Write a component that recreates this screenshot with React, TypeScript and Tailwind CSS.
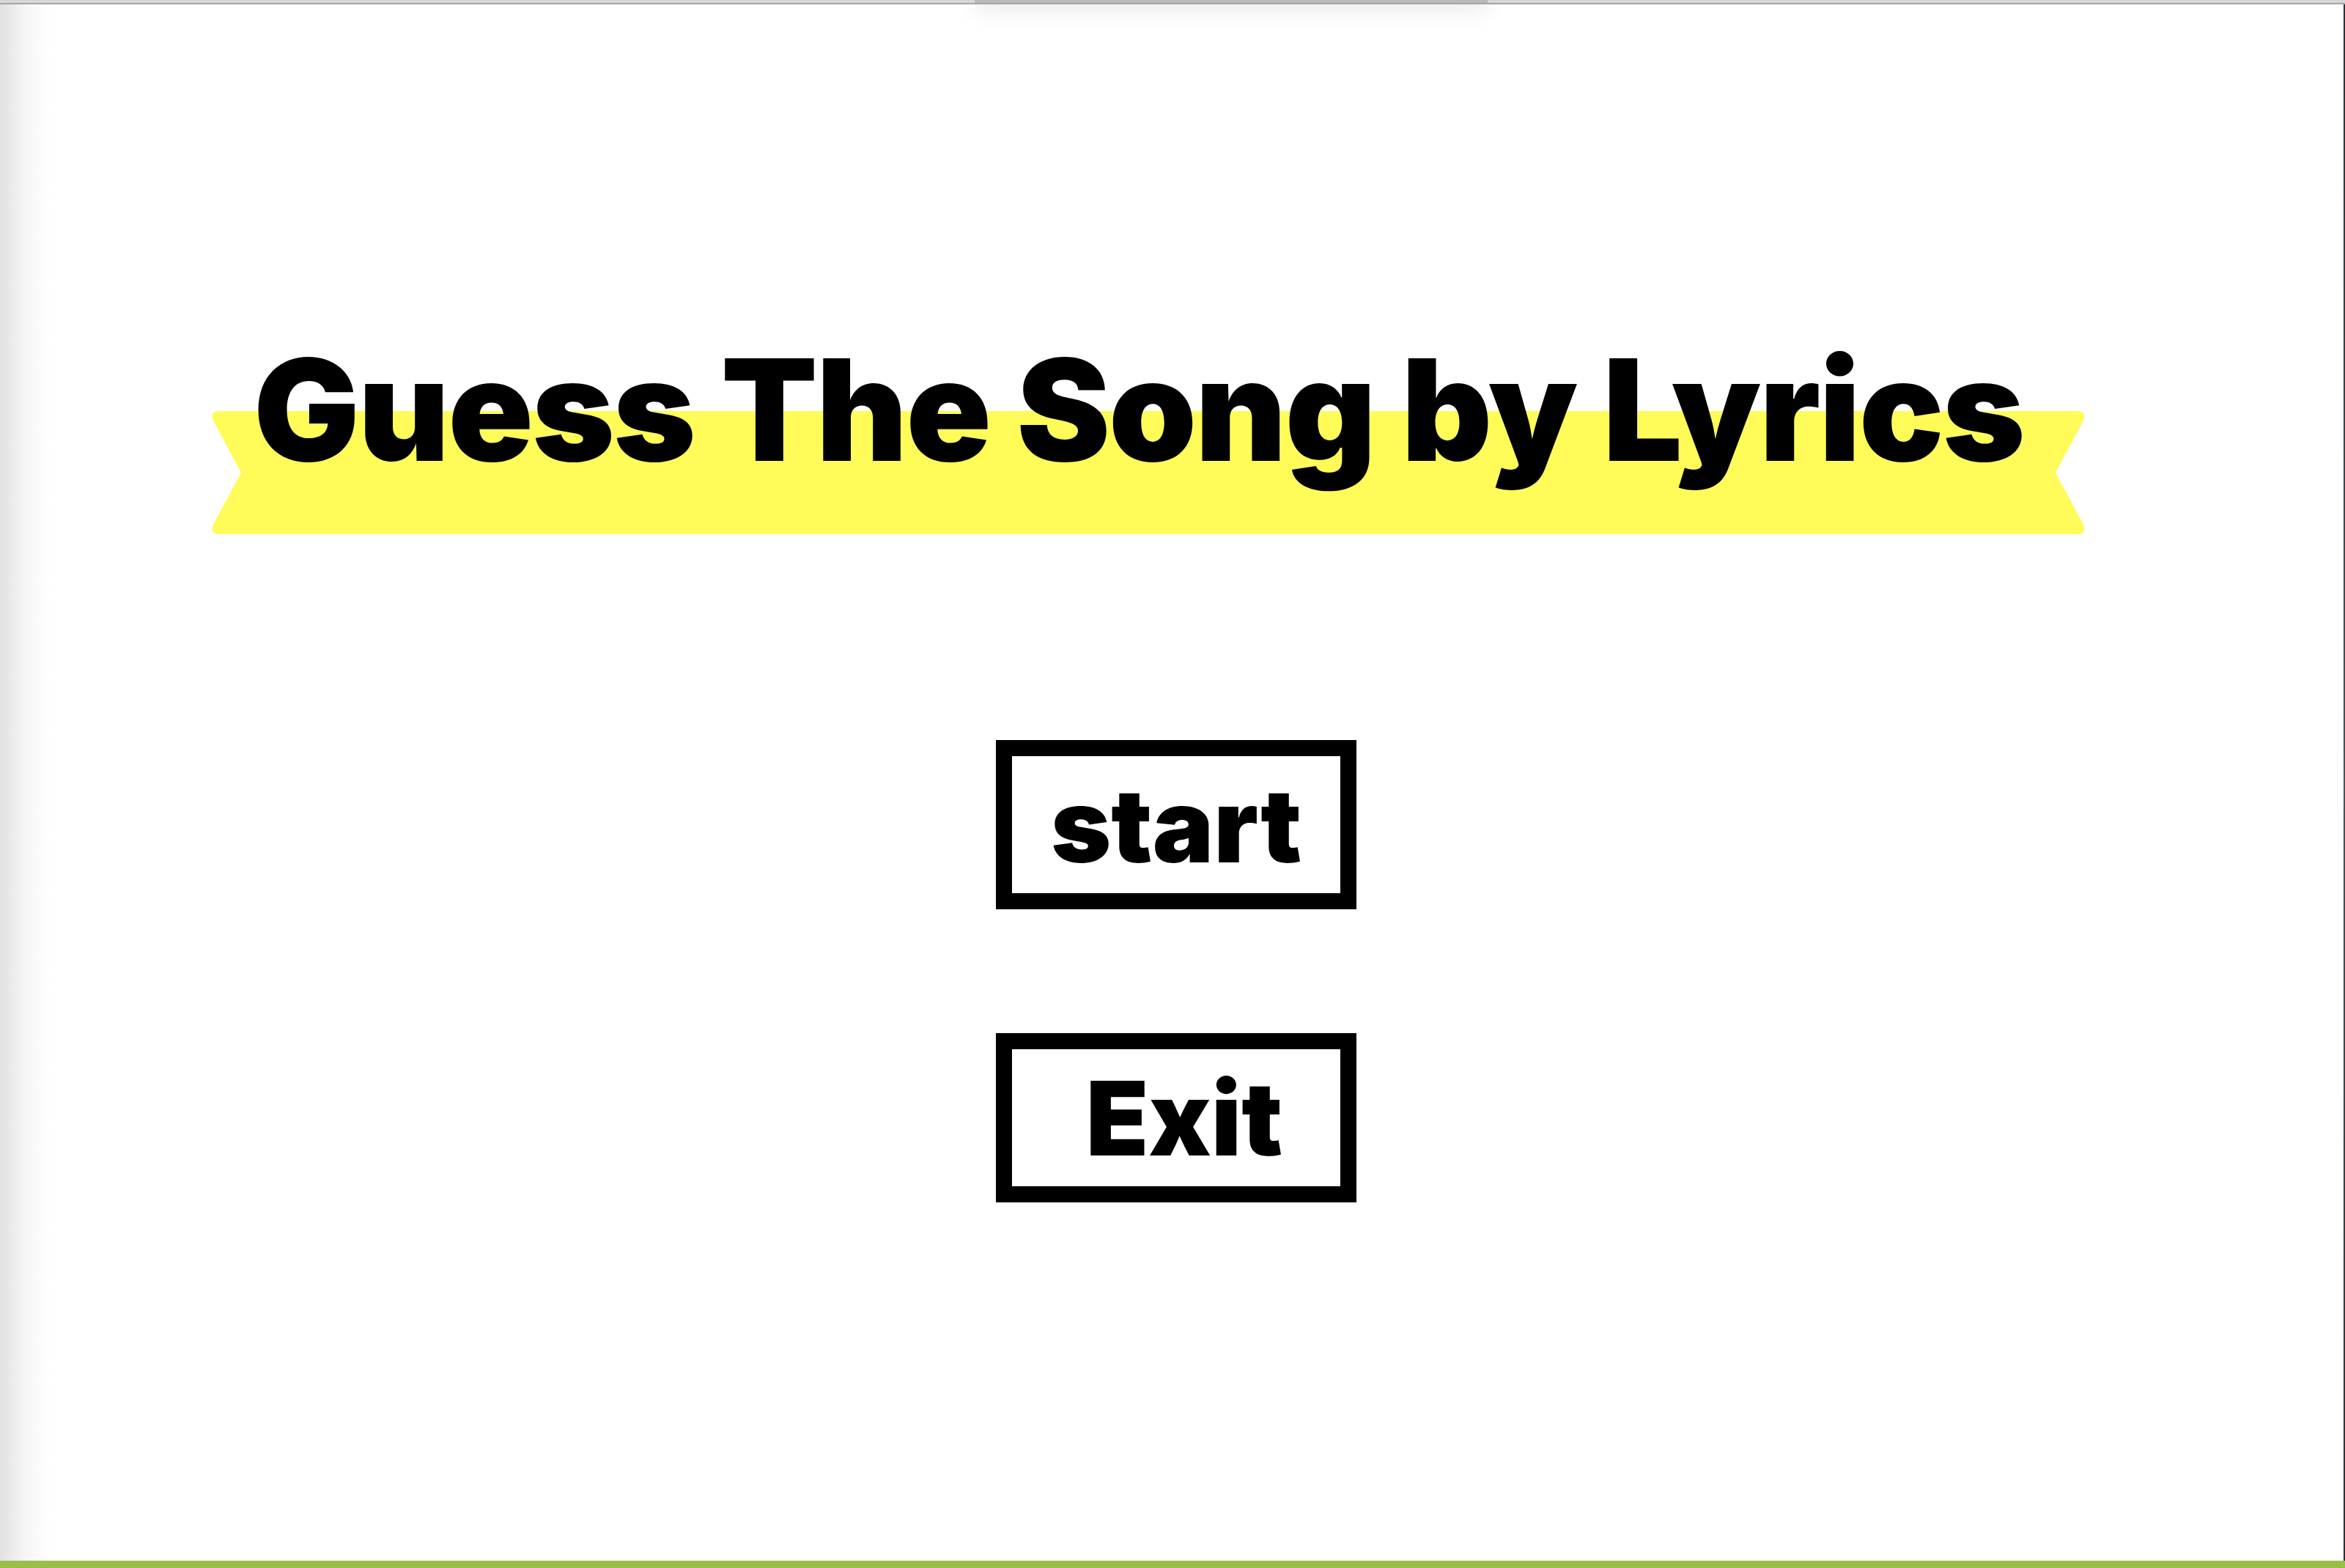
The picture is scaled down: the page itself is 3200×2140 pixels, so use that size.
const BANNER_W = 2566;
const BANNER_H = 168;

// ribbon path with notched ends and softened corners
const ribbon = (w: number, h: number) => {
  const n = 45;
  const m = h / 2;
  return [
    `M 16 0`,
    `H ${w - 16}`,
    `Q ${w} 0 ${w - 8.5} 15.9`,
    `L ${w - n} ${m}`,
    `L ${w - 8.5} ${h - 15.9}`,
    `Q ${w} ${h} ${w - 16} ${h}`,
    `H 16`,
    `Q 0 ${h} 8.5 ${h - 15.9}`,
    `L ${n} ${m}`,
    `L 8.5 15.9`,
    `Q 0 0 16 0 Z`,
  ].join(" ");
};

function MenuButton({ label, className = "" }: { label: string; className?: string }) {
  return (
    <button
      type="button"
      className={`flex h-[231px] w-[492px] items-center justify-center border-[22px] border-black bg-white text-[140px] leading-none font-black text-black ${className}`}
    >
      {label}
    </button>
  );
}

export default function App() {
  return (
    <div className="flex h-[2140px] w-full flex-col overflow-hidden bg-white font-['Inter',sans-serif] text-black">
      {/* window chrome edge */}
      <div className="flex h-[4px] bg-[#d6d6d6]">
        <div className="ml-[1330px] h-full w-[700px] bg-[#b9b9b9]" />
      </div>
      <div className="h-[2px] bg-[#a6a6a6]" />

      <div className="flex min-h-0 flex-1">
        <main className="relative flex-1 overflow-hidden">
          <div className="pointer-events-none absolute left-[1330px] top-[-12px] h-[12px] w-[700px] shadow-[0_4px_30px_rgba(0,0,0,0.16)]" />
          <div className="pointer-events-none absolute inset-y-0 left-0 w-[70px] bg-gradient-to-r from-[#e1e1e1] via-[#f6f6f6] to-transparent" />

          <div className="relative ml-[284px] mt-[457px] w-[2566px]">
            <svg
              className="absolute left-0 top-[98px]"
              width={BANNER_W}
              height={BANNER_H}
              viewBox={`0 0 ${BANNER_W} ${BANNER_H}`}
            >
              <path d={ribbon(BANNER_W, BANNER_H)} fill="#fffc5a" />
            </svg>
            <h1 className="relative pl-[62px] text-[192px] leading-none font-black tracking-[-2px] whitespace-nowrap">
              Guess The Song by Lyrics
            </h1>
          </div>

          <div className="mt-[355px] flex flex-col items-center gap-[169px] pl-[12px]">
            <MenuButton label="start" />
            <MenuButton label="Exit" className="pl-[22px]" />
          </div>
        </main>
        <div className="w-[2px] bg-gradient-to-b from-[#2b3135] via-[#4a5257] to-[#2a2f33]" />
      </div>

      <div className="h-[10px] bg-[#98bf47]" />
    </div>
  );
}
